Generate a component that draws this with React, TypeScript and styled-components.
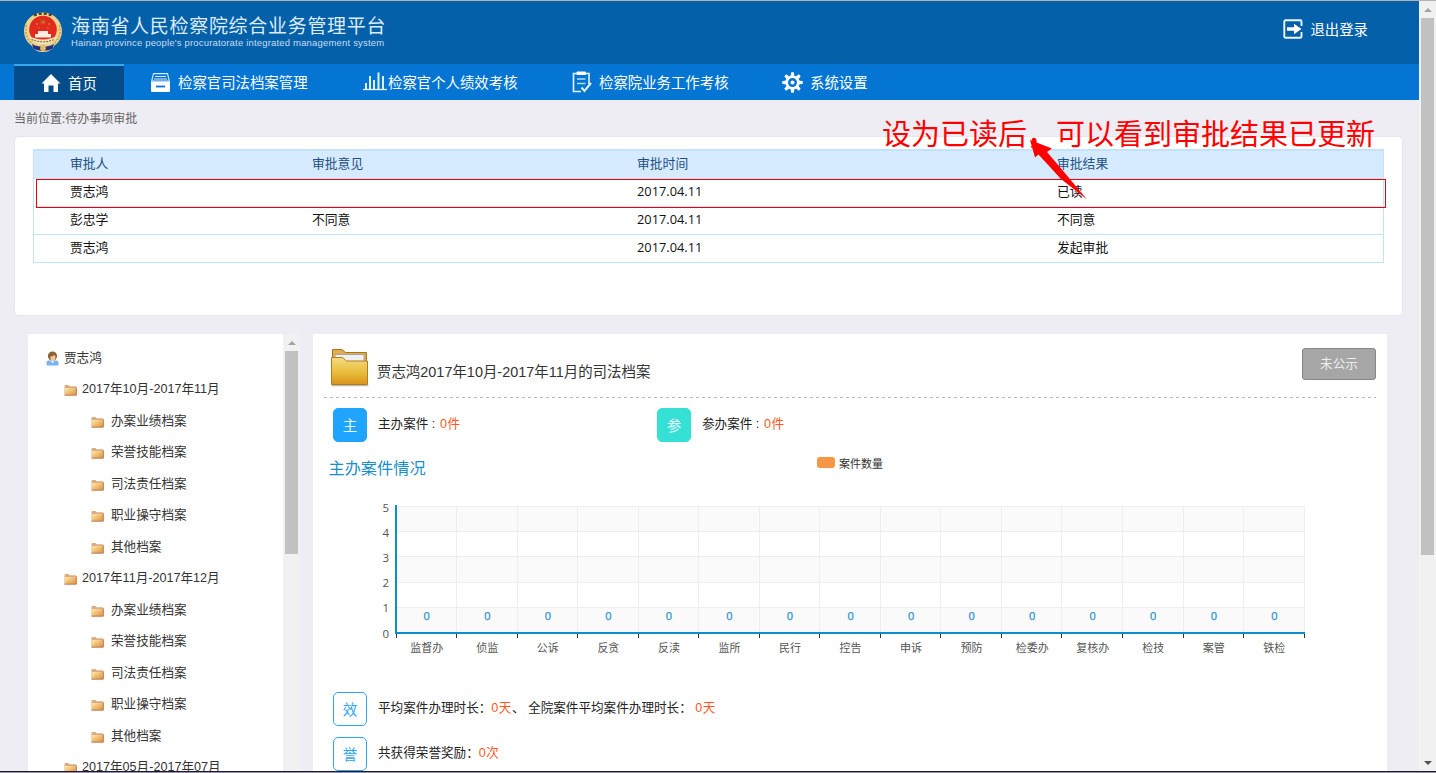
import React from 'react';
import styled, { createGlobalStyle } from 'styled-components';

const sans = '"Open Sans", "Noto Sans CJK SC", sans-serif';
const arial = '"Liberation Sans", "Noto Sans CJK SC", sans-serif';

const GlobalStyle = createGlobalStyle`
  * { box-sizing: border-box; }
  html, body { margin: 0; height: 773px; overflow: hidden; }
  body { font-family: ${sans}; background: #eeedf3; color: #333; }
  svg { display: block; flex: none; }
`;

const Window = styled.div`
  position: relative;
  width: 1436px;
  height: 773px;
  display: grid;
  grid-template-rows: 1px 770px 1px 1px;
  overflow: hidden;
`;
const TopEdge = styled.div`background: #b2b2b2;`;
const BottomEdge = styled.div<{ $color: string }>`background: ${p => p.$color};`;
const Frame = styled.div`display: grid; grid-template-columns: 1419px 17px; min-height: 0;`;
const Page = styled.div`display: flex; flex-direction: column; min-width: 0; overflow: hidden;`;

const Header = styled.header`
  height: 63px;
  flex: none;
  background: #0460a9;
  display: flex;
  justify-content: space-between;
  padding: 0 50px 0 23px;
`;
const Brand = styled.div`display: flex; gap: 8px; padding-top: 10px;`;
const BrandText = styled.div`display: flex; flex-direction: column; color: #dcecf9;`;
const BrandName = styled.div`
  font: 400 19px/28px "Noto Sans CJK SC", sans-serif;
  letter-spacing: 0.7px;
  white-space: nowrap;
`;
const BrandSub = styled.div`
  font: 400 9.5px/10px "Liberation Sans", sans-serif;
  letter-spacing: 0.18px;
  white-space: nowrap;
  color: #c4def3;
  margin-top: -1px;
`;
const Logout = styled.a`
  display: flex;
  gap: 7px;
  height: 56px;
  align-items: center;
  color: #fff;
  font-size: 14.4px;
  margin-right: 1px;
  span { margin-top: -2px; }
`;

const Nav = styled.nav`height: 36px; flex: none; background: #0475d2; display: flex; padding-left: 14px;`;
const NavItem = styled.a<{ $width: number; $gap: number; $active?: boolean }>`
  width: ${p => p.$width}px;
  display: flex;
  align-items: center;
  gap: ${p => p.$gap}px;
  padding-left: 27px;
  color: #fff;
  font-size: 14.4px;
  line-height: 20px;
  white-space: nowrap;
  background: ${p => (p.$active ? '#044d8a' : 'transparent')};
  border-top: ${p => (p.$active ? '2px solid #35aaf3' : '0 solid transparent')};
  span { padding-top: 2px; }
`;
const Crumb = styled.div`
  height: 36px;
  flex: none;
  padding-left: 14px;
  font-size: 12px;
  line-height: 37px;
  color: #666;
`;

const Card = styled.section`
  margin: 0 17px 0 14px;
  width: 1389px;
  height: 180px;
  flex: none;
  background: #fff;
  border: 1px solid #e6e6ec;
  border-radius: 5px;
  padding: 12px 18px;
`;
const Table = styled.div`
  width: 1351px;
  border: 1px solid #c3e2fd;
  border-top-width: 2px;
  font-size: 12.8px;
`;
const Row = styled.div<{ $head?: boolean }>`
  display: grid;
  grid-template-columns: 242px 325px 420px 1fr;
  padding-left: 36px;
  height: 28px;
  line-height: 25px;
  color: ${p => (p.$head ? '#1f507f' : '#111')};
  background: ${p => (p.$head ? '#d6ebff' : '#fff')};
  border-bottom: 1px solid #c3e2fd;
  &:last-child { height: 27px; border-bottom: 0; }
`;

const Columns = styled.div`display: flex; gap: 13px; padding: 18px 0 0 28px; height: 455px;`;
const Tree = styled.aside`width: 272px; display: flex; background: #fff; overflow: hidden; font-family: ${arial};`;
const TreeList = styled.div`flex: 1; display: flex; flex-direction: column; padding-top: 8px;`;
const TreeRow = styled.div<{ $indent: number; $gap: number }>`
  height: 31.5px;
  flex: none;
  display: flex;
  align-items: center;
  gap: ${p => p.$gap}px;
  padding-left: ${p => p.$indent}px;
  font-size: 12.6px;
  color: #333;
  white-space: nowrap;
  svg { margin-top: 2px; }
  span { margin-top: -3px; }
`;
const Track = styled.div<{ $width: number }>`
  width: ${p => p.$width}px;
  background: #f1f1f1;
  display: flex;
  flex-direction: column;
  align-items: center;
`;
const Arrow = styled.div<{ $down?: boolean }>`
  height: 17px;
  width: 100%;
  flex: none;
  display: flex;
  align-items: center;
  justify-content: center;
  margin-top: ${p => (p.$down ? 'auto' : '0')};
`;
const Thumb = styled.div<{ $height: number }>`width: 13px; height: ${p => p.$height}px; background: #c1c1c1;`;

const Detail = styled.main`width: 1074px; background: #fff; padding: 0 11px; font-family: ${arial}; overflow: hidden;`;
const DetailHead = styled.div`height: 63px; display: flex; justify-content: space-between; padding-left: 5px;`;
const Title = styled.div`
  display: flex;
  gap: 8px;
  padding-top: 13px;
  font-size: 14.44px;
  line-height: 50px;
  white-space: nowrap;
`;
const StatusButton = styled.button`
  width: 74px;
  height: 32px;
  margin-top: 14px;
  border: 1px solid #868686;
  border-radius: 3px;
  background: #a6a6a6;
  color: #eee;
  font: 12.6px/30px ${sans};
  padding: 0;
`;
const Dashes = styled.div`
  height: 1px;
  background: repeating-linear-gradient(90deg, #bbb 0 3px, transparent 3px 6px);
`;
const Stats = styled.div`display: grid; grid-template-columns: 324px 1fr; padding: 10px 0 0 9px;`;
const Fact = styled.div`
  display: flex;
  gap: 11px;
  height: 34px;
  font-size: 12.6px;
  line-height: 32px;
  white-space: pre;
  color: #222;
`;
const Num = styled.span<{ $shift?: number }>`
  color: #ff5722;
  letter-spacing: 0.5px;
  margin-left: ${p => p.$shift || 0}px;
`;
const Tile = styled.span<{ $fill?: string }>`
  width: 34px;
  height: 34px;
  border-radius: 5px;
  border: 1px solid ${p => p.$fill || '#2ba5f7'};
  background: ${p => p.$fill || '#fff'};
  color: ${p => (p.$fill ? '#e6f6ff' : '#2ba5f7')};
  font-size: 14.5px;
  line-height: 34px;
  text-align: center;
`;
const ChartBox = styled.div`height: 250px;`;
const Facts = styled.div`display: flex; flex-direction: column; gap: 11px; padding-left: 9px;`;

const Callout = styled.div`
  position: absolute;
  left: 882px;
  top: 112px;
  font: 400 29px/40px "Noto Sans CJK SC", sans-serif;
  color: #f00;
  white-space: nowrap;
`;
const Highlight = styled.div`
  position: absolute;
  left: 36px;
  top: 179px;
  width: 1350px;
  height: 29px;
  border: 1px solid #e00;
`;
const Pointer = styled.svg`position: absolute; left: 1025px; top: 134px;`;

const Emblem = () => (
  <svg width="40" height="42" viewBox="0 0 40 42">
    <path d="M20 1.500C28 1.500 38 7 39 19c0 9-4 13-8 16-2 4-6 6-11 6s-9-2-11-6C5 32 1 28 1 19 2 7 12 1.500 20 1.500z" fill="#ecd28c" />
    <path d="M3.500 14c-2 9 1 15 7 20M36.500 14c2 9-1 15-7 20" stroke="#c9a050" strokeWidth="1.500" strokeDasharray="2 1.500" fill="none" />
    <path d="M11 4.500c5-2.500 13-2.500 18 0" stroke="#4a3c1c" strokeWidth="2.200" strokeDasharray="3 2" fill="none" />
    <path d="M9 33c6 3.500 16 3.500 22 0l-1.500 4.500C25 40.500 15 40.500 10.500 37.500z" fill="#27307f" />
    <path d="M18 33h4l1 5-3 3-3-3z" fill="#e0bd68" />
    <circle cx="20" cy="18.500" r="13.800" fill="#e32a1c" />
    <path d="M6 25c8 4.500 20 4.500 28 0-2 6-8 8.500-14 8.500S8 31 6 25z" fill="#efe3bb" />
    <path d="M8.500 28.500c7 3 16 3 23 0" stroke="#8b7436" strokeWidth="1.200" strokeDasharray="2 1" fill="none" />
    <path d="M15 20h10v3H15zM12 23h16v3.500H12z" fill="#fbeee0" />
    <path d="M20 8l1 2h2l-1.500 1.500.5 2-2-1-2 1 .5-2L17 10h2z" fill="#b8722c" />
    <path d="M13 12h2v2h-2zM25 12h2v2h-2zM15 16h1.500v1.500H15zM24 16h1.500v1.500H24z" fill="#b8722c" />
  </svg>
);
const ExitIcon = () => (
  <svg width="20" height="20" viewBox="0 0 20 20">
    <path d="M18.500 7V2.500A1.200 1.200 0 0 0 17.300 1.300H2.500A1.200 1.200 0 0 0 1.300 2.500v15a1.200 1.200 0 0 0 1.200 1.200h14.800a1.200 1.200 0 0 0 1.200-1.200V13" fill="none" stroke="#eaf5ff" strokeWidth="1.900" />
    <path d="M4 8.200h7V4.800l7.500 5.200-7.500 5.200v-3.400H4z" fill="#fff" />
  </svg>
);
const HomeIcon = () => (
  <svg width="20" height="18" viewBox="0 0 20 18">
    <path d="M10 0l9.500 9.500H17V18h-4.500v-6.500h-5V18H3V9.500H.5z" fill="#fff" />
  </svg>
);
const DrawerIcon = () => (
  <svg width="19" height="19" viewBox="0 0 19 19">
    <path d="M2.500.6h14L18.300 8H.7z" fill="none" stroke="#d5ebff" strokeWidth="1.100" />
    <path d="M4 3.500h11M3 6h13" stroke="#d5ebff" strokeWidth="1.200" />
    <path d="M0 8.500h19V18a1 1 0 0 1-1 1H1a1 1 0 0 1-1-1z" fill="#fff" />
    <path d="M5 13.500h9" stroke="#0475d2" strokeWidth="1.800" />
  </svg>
);
const BarsIcon = () => (
  <svg width="24" height="21" viewBox="0 0 24 21">
    <path d="M3 17V11M7 17V4M11 17V8M15.500 17V.5M20 17V4" stroke="#dcefff" strokeWidth="2" fill="none" />
    <path d="M0 17.500h24" stroke="#eaf5ff" strokeWidth="1.300" />
  </svg>
);
const ClipIcon = () => (
  <svg width="20" height="22" viewBox="0 0 20 22">
    <path d="M17 13V2.500H1.500v18H9" fill="none" stroke="#e6f3ff" strokeWidth="1.600" />
    <path d="M5 1h8.500v2.500H5z" fill="#fff" stroke="#fff" />
    <path d="M5 8h8.500M5 12.500h8.500" stroke="#b9dbf8" strokeWidth="1.500" />
    <path d="M9.500 16.500l3 3.500 6.500-8" fill="none" stroke="#e6f3ff" strokeWidth="2" />
  </svg>
);
const GearIcon = () => (
  <svg width="21" height="21" viewBox="0 0 21 21">
    <circle cx="10.500" cy="10.500" r="5.800" fill="none" stroke="#fff" strokeWidth="2.600" />
    <circle cx="10.500" cy="10.500" r="2" fill="#fff" />
    {[0, 45, 90, 135, 180, 225, 270, 315].map(a => (
      <path key={a} d="M9.200 .2h2.600L12.400 4H8.600z" fill="#fff" transform={`rotate(${a} 10.500 10.500)`} />
    ))}
  </svg>
);
const SmallFolder = () => (
  <svg width="13" height="12" viewBox="0 0 13 12">
    <defs>
      <linearGradient id="sf" x1="0" y1="0" x2="1" y2="1">
        <stop offset="0" stopColor="#ffeaa6" />
        <stop offset="1" stopColor="#dd9440" />
      </linearGradient>
    </defs>
    <path d="M.5 2A1 1 0 0 1 1.500 1h3L5.500 2.300h6a1 1 0 0 1 1 1v8H.5z" fill="#dcab84" />
    <path d="M1 4h10.800v6.800H1z" fill="url(#sf)" />
    <path d="M.5 11.200h11.800V3.500" stroke="#bd7144" strokeWidth=".9" fill="none" />
  </svg>
);
const PersonIcon = () => (
  <svg width="13" height="15" viewBox="0 0 13 15">
    <path d="M.5 14.500v-3c0-1.500 1-2 4-2h4c3 0 4 .5 4 2v3z" fill="#79b4f2" />
    <path d="M4.500 9.500h4l-2 3z" fill="#e8f2fb" />
    <circle cx="6.500" cy="5" r="4.600" fill="#8a6234" />
    <path d="M4.300 5.500c2 0 3-1 4-1.500l1.200 1.500c0 3-1 4.500-2.800 4.500S4.300 8.500 4.300 5.500z" fill="#f0c49a" />
  </svg>
);
const BigFolder = () => (
  <svg width="40" height="40" viewBox="0 0 40 40">
    <defs>
      <linearGradient id="bf" x1="0" y1="0" x2="0" y2="1">
        <stop offset="0" stopColor="#f3dc80" />
        <stop offset="0.550" stopColor="#e9bd3c" />
        <stop offset="1" stopColor="#d8921a" />
      </linearGradient>
    </defs>
    <path d="M2.500 38.500h37" stroke="#bbb" strokeWidth="1.500" />
    <path d="M3.500 12V2.500h9.500L16.500 5.500h21V14" fill="#e0ae4c" stroke="#a8741c" />
    <path d="M6 7.500h29v8H6z" fill="#eef0f2" stroke="#999" strokeWidth=".8" />
    <path d="M2.500 10.500h11l4 3.500h21v23.500h-36z" fill="url(#bf)" stroke="#b07c1e" />
  </svg>
);
const Triangle = ({ down, color }: { down?: boolean; color: string }) => (
  <svg width="8" height="4" viewBox="0 0 8 4">
    <path d={down ? 'M0 0h8L4 4z' : 'M4 0l4 4H0z'} fill={color} />
  </svg>
);

const depts = ['监督办', '侦监', '公诉', '反贪', '反渎', '监所', '民行', '控告', '申诉', '预防', '检委办', '复核办', '检技', '案管', '铁检'];
const X0 = 72;
const STEP = 60.54;
const Y0 = 191;
const BAND = 25.2;
const xAt = (i: number) => Math.floor(X0 + i * STEP) + 0.5;
const yAt = (i: number) => Math.round(Y0 - i * BAND);

const Chart = () => (
  <svg width="1052" height="250" viewBox="0 0 1052 250" fontFamily={sans}>
    <text x="4.500" y="31.500" fontSize="16.200" fill="#1a8fca">主办案件情况</text>
    <rect x="493" y="15" width="18" height="11" rx="3" fill="#f79646" />
    <text x="515" y="25.500" fontSize="11" fill="#333">案件数量</text>
    {[0, 1, 2, 3, 4].map(i => (
      <rect key={i} x={X0} y={yAt(i + 1)} width={908} height={yAt(i) - yAt(i + 1)} fill={i % 2 ? '#fff' : '#fafafa'} />
    ))}
    {[1, 2, 3, 4, 5].map(i => (
      <path key={i} d={`M${X0} ${yAt(i) - 0.5}h909`} stroke="#eee" />
    ))}
    {[...depts, ''].map((d, i) => (
      <path key={i} d={`M${xAt(i)} 64v127`} stroke="#eee" />
    ))}
    {[0, 1, 2, 3, 4, 5].map(i => (
      <text key={i} x="65" y={Y0 + 4.5 - i * BAND} fontSize="11.500" fill="#555" textAnchor="end">{i}</text>
    ))}
    {depts.map((d, i) => (
      <g key={d} textAnchor="middle" fontSize="11">
        <text x={X0 + (i + 0.5) * STEP + 0.5} y="178" fill="#2b93c8" stroke="#2b93c8" strokeWidth=".25">0</text>
        <text x={X0 + (i + 0.5) * STEP + 0.5} y="210" fill="#555">{d}</text>
      </g>
    ))}
    {[...depts, ''].map((d, i) => (
      <path key={i} d={`M${xAt(i)} 192v4`} stroke="#333" />
    ))}
    <path d="M72 63v129M71 191h910" stroke="#0d8dce" strokeWidth="2" />
  </svg>
);

const files = ['办案业绩档案', '荣誉技能档案', '司法责任档案', '职业操守档案', '其他档案'];
const periods = [
  { name: '2017年10月-2017年11月', files },
  { name: '2017年11月-2017年12月', files },
  { name: '2017年05月-2017年07月', files: [] },
];
const approvals = [
  ['贾志鸿', '', '2017.04.11', '已读'],
  ['彭忠学', '不同意', '2017.04.11', '不同意'],
  ['贾志鸿', '', '2017.04.11', '发起审批'],
];

export default function App() {
  return (
    <Window>
      <GlobalStyle />
      <TopEdge />
      <Frame>
        <Page>
          <Header>
            <Brand>
              <Emblem />
              <BrandText>
                <BrandName>海南省人民检察院综合业务管理平台</BrandName>
                <BrandSub>Hainan province people's procuratorate integrated management system</BrandSub>
              </BrandText>
            </Brand>
            <Logout><ExitIcon /><span>退出登录</span></Logout>
          </Header>
          <Nav>
            <NavItem $width={110} $gap={7} $active><HomeIcon /><span>首页</span></NavItem>
            <NavItem $width={212} $gap={8}><DrawerIcon /><span>检察官司法档案管理</span></NavItem>
            <NavItem $width={209} $gap={1}><BarsIcon /><span>检察官个人绩效考核</span></NavItem>
            <NavItem $width={210} $gap={7}><ClipIcon /><span>检察院业务工作考核</span></NavItem>
            <NavItem $width={140} $gap={7}><GearIcon /><span>系统设置</span></NavItem>
          </Nav>
          <Crumb>当前位置:待办事项审批</Crumb>
          <Card>
            <Table>
              <Row $head>
                {['审批人', '审批意见', '审批时间', '审批结果'].map(h => <span key={h}>{h}</span>)}
              </Row>
              {approvals.map((r, i) => (
                <Row key={i}>{r.map((c, j) => <span key={j}>{c}</span>)}</Row>
              ))}
            </Table>
          </Card>
          <Columns>
            <Tree>
              <TreeList>
                <TreeRow $indent={18} $gap={5}><PersonIcon /><span>贾志鸿</span></TreeRow>
                {periods.map(p => (
                  <React.Fragment key={p.name}>
                    <TreeRow $indent={36} $gap={5}><SmallFolder /><span>{p.name}</span></TreeRow>
                    {p.files.map(f => (
                      <TreeRow key={f} $indent={63} $gap={7}><SmallFolder /><span>{f}</span></TreeRow>
                    ))}
                  </React.Fragment>
                ))}
              </TreeList>
              <Track $width={17}>
                <Arrow><Triangle color="#a3a3a3" /></Arrow>
                <Thumb $height={203} />
              </Track>
            </Tree>
            <Detail>
              <DetailHead>
                <Title><BigFolder />贾志鸿2017年10月-2017年11月的司法档案</Title>
                <StatusButton>未公示</StatusButton>
              </DetailHead>
              <Dashes />
              <Stats>
                <Fact><Tile $fill="#1fa5ff">主</Tile><span>主办案件 : <Num $shift={1}>0件</Num></span></Fact>
                <Fact><Tile $fill="#35e0d5">参</Tile><span>参办案件 : <Num $shift={1}>0件</Num></span></Fact>
              </Stats>
              <ChartBox><Chart /></ChartBox>
              <Facts>
                <Fact><Tile>效</Tile><span>平均案件办理时长：<Num>0天</Num>、 全院案件平均案件办理时长： <Num>0天</Num></span></Fact>
                <Fact><Tile>誉</Tile><span>共获得荣誉奖励：<Num>0次</Num></span></Fact>
              </Facts>
            </Detail>
          </Columns>
        </Page>
        <Track $width={17}>
          <Arrow><Triangle color="#a3a3a3" /></Arrow>
          <Thumb $height={537} />
          <Arrow $down><Triangle down color="#505050" /></Arrow>
        </Track>
      </Frame>
      <BottomEdge $color="#1d1a2b" />
      <BottomEdge $color="#9a8fa8" />
      <Callout>设为已读后，可以看到审批结果已更新</Callout>
      <Highlight />
      <Pointer width="65" height="68" viewBox="0 0 65 68">
        <path d="M5 6l22 8.500-5 3.500 17 20 23 27.500L36 45 13.500 20.500 10 23.500z" fill="#f00" />
      </Pointer>
    </Window>
  );
}
